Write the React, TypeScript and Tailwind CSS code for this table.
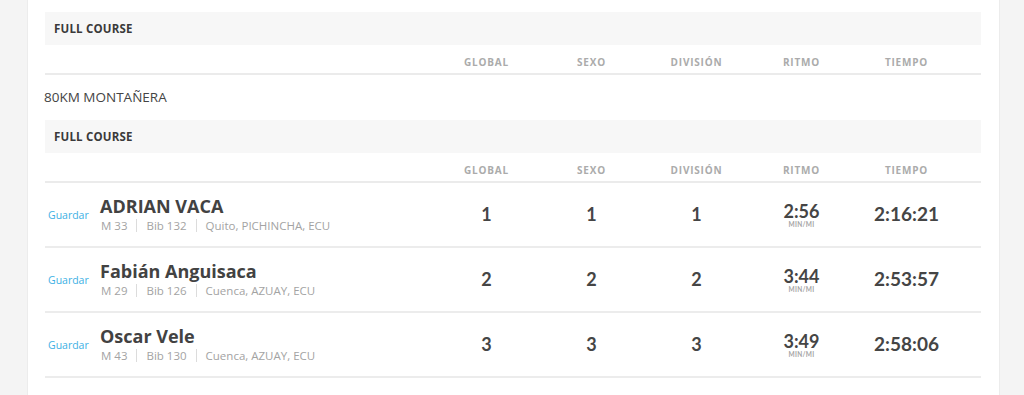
import React from "react";

interface Runner {
  name: string;
  age: string;
  bib: string;
  place: string;
  global: number;
  sex: number;
  division: number;
  pace: string;
  time: string;
}

const runners: Runner[] = [
  { name: "ADRIAN VACA", age: "M 33", bib: "Bib 132", place: "Quito, PICHINCHA, ECU", global: 1, sex: 1, division: 1, pace: "2:56", time: "2:16:21" },
  { name: "Fabián Anguisaca", age: "M 29", bib: "Bib 126", place: "Cuenca, AZUAY, ECU", global: 2, sex: 2, division: 2, pace: "3:44", time: "2:53:57" },
  { name: "Oscar Vele", age: "M 43", bib: "Bib 130", place: "Cuenca, AZUAY, ECU", global: 3, sex: 3, division: 3, pace: "3:49", time: "2:58:06" },
];

const columns = ["GLOBAL", "SEXO", "DIVISIÓN", "RITMO", "TIEMPO"];

const grid = "grid grid-cols-[1fr_105px_105px_105px_105px_105px] pr-[22px]";

function CourseBand() {
  return (
    <div className="h-[33px] bg-[#f7f7f7] flex items-center pl-[9px] text-[11.5px] font-bold text-[#3a3a3a] tracking-[0.2px]">
      FULL COURSE
    </div>
  );
}

function HeaderRow() {
  return (
    <div className={`${grid} h-[30px] border-b-2 border-[#ebebeb] pt-[11px]`}>
      <div />
      {columns.map((c) => (
        <div key={c} className="text-center text-[10px] leading-[12px] font-bold tracking-[0.8px] text-[#ababab]">
          {c}
        </div>
      ))}
    </div>
  );
}

function RunnerRow({ r }: { r: Runner }) {
  return (
    <div className={`${grid} h-[65px] border-b-2 border-[#ececec] items-center`}>
      <div className="flex items-center">
        <button className="w-[56px] pl-[3px] text-left text-[10.5px] text-[#3cb0e4] mt-[2px]">Guardar</button>
        <div>
          <div className="text-[18px] leading-[20px] font-bold text-[#424242] -ml-px">{r.name}</div>
          <div className="flex items-center text-[11.5px] leading-[16px] text-[#a3a3a3] mt-[2px]">
            <span>{r.age}</span>
            <span className="mx-[9px] w-px h-[13px] bg-[#dcdcdc]" />
            <span>{r.bib}</span>
            <span className="mx-[9px] w-px h-[13px] bg-[#dcdcdc]" />
            <span>{r.place}</span>
          </div>
        </div>
      </div>
      {[r.global, r.sex, r.division].map((n, i) => (
        <div key={i} className="text-center font-['Lato'] font-bold text-[18px] text-[#454545]">
          {n}
        </div>
      ))}
      <div className="flex flex-col items-center font-['Lato']">
        <span className="font-bold text-[18px] leading-[20px] text-[#454545]">{r.pace}</span>
        <span className="text-[6.5px] leading-[8px] font-bold text-[#a5a5a5] tracking-[0.3px]">MIN/MI</span>
      </div>
      <div className="text-center font-['Lato'] font-bold text-[19px] text-[#454545]">{r.time}</div>
    </div>
  );
}

export default function App() {
  return (
    <div className="h-[395px] bg-[#f4f4f4] font-['Open_Sans',sans-serif] overflow-hidden">
      <div className="ml-[27px] w-[973px] h-full bg-white border-x border-[#ececec] pl-[17px] pr-[18px] pt-[12px]">
        <CourseBand />
        <HeaderRow />
        <div className="h-[45px] flex items-center text-[13.5px] text-[#444] -ml-px">80KM MONTAÑERA</div>
        <CourseBand />
        <HeaderRow />
        {runners.map((r) => (
          <RunnerRow key={r.name} r={r} />
        ))}
      </div>
    </div>
  );
}
